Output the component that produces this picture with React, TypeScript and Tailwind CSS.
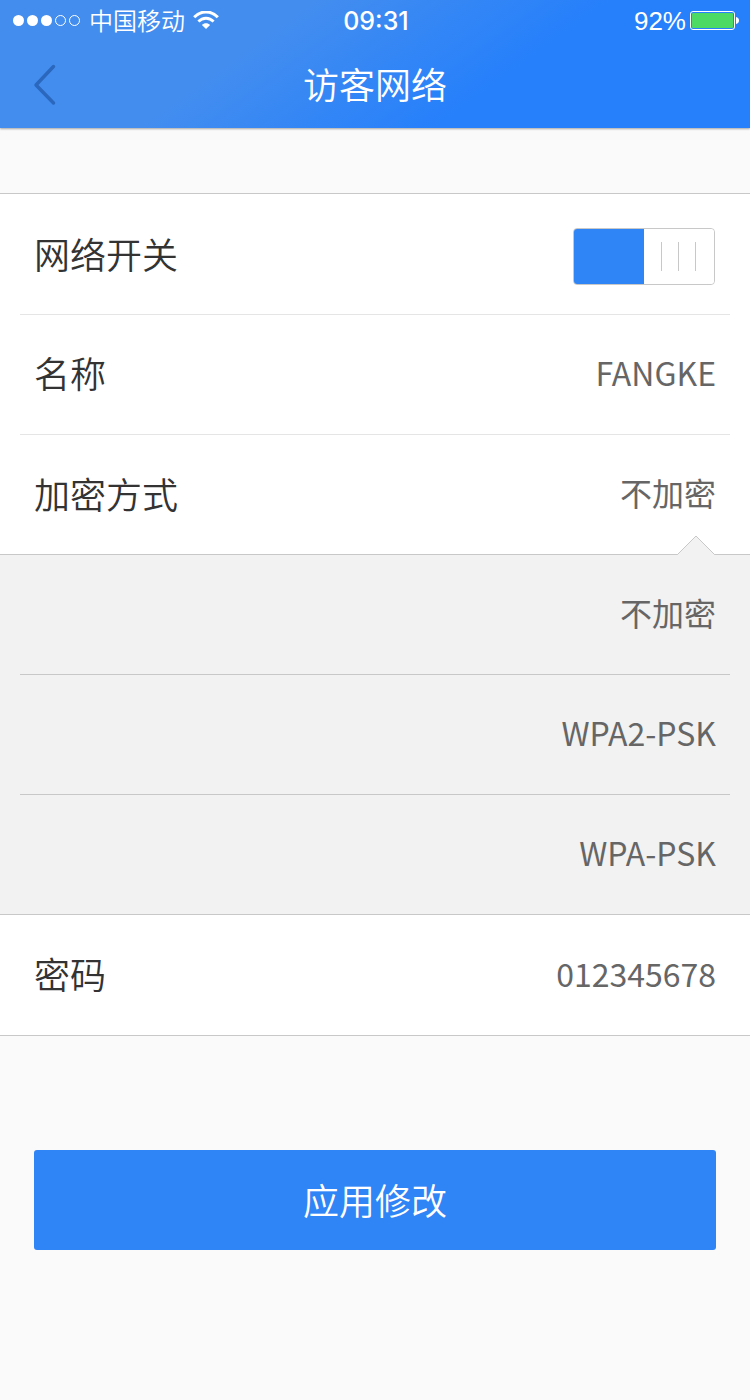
import { useState } from "react";
import type { ReactNode } from "react";

const ENCRYPTION_MODES = ["不加密", "WPA2-PSK", "WPA-PSK"];

function WifiIcon() {
  return (
    <svg className="h-[18px] w-[26px]" viewBox="0 0 26 18" fill="none" aria-hidden="true">
      <path d="M1.2 6.2C7.8 -0.8 18.2 -0.8 24.8 6.2" stroke="white" strokeWidth="3" />
      <path d="M5.4 10.6C9.8 6.1 16.2 6.1 20.6 10.6" stroke="white" strokeWidth="2.8" />
      <path d="M13 18L8.9 13.9C11.2 11.6 14.8 11.6 17.1 13.9Z" fill="white" />
    </svg>
  );
}

function StatusBar() {
  return (
    <div className="grid h-10 grid-cols-3 items-center pr-[11px] pl-[13px] text-white">
      <div className="flex items-center">
        <svg className="h-3 w-[68px]" viewBox="0 0 68 12" aria-hidden="true">
          <circle cx="5.5" cy="6.5" r="5.5" fill="white" />
          <circle cx="19.5" cy="6.5" r="5.5" fill="white" />
          <circle cx="33.5" cy="6.5" r="5.5" fill="white" />
          <circle cx="47.5" cy="6.5" r="5" fill="none" stroke="white" />
          <circle cx="61.5" cy="6.5" r="5" fill="none" stroke="white" />
        </svg>
        <span className="mr-2 ml-2 text-2xl leading-10 whitespace-nowrap">中国移动</span>
        <WifiIcon />
      </div>
      <span className="pt-0.5 text-center font-['Inter',sans-serif] text-[25px] leading-9 font-medium">09:31</span>
      <div className="flex items-center justify-end gap-1">
        <span className="pt-0.5 font-['Liberation_Sans',sans-serif] text-[26px] leading-9">92%</span>
        <svg className="h-5 w-[49px]" viewBox="0 0 49 20" aria-hidden="true">
          <rect x="0.5" y="1.5" width="44" height="18" rx="2.5" fill="none" stroke="white" />
          <rect x="2" y="3" width="41" height="15" rx="1" fill="#4cd964" />
          <path d="M46 7C50 7.5 50 13.500 46 14Z" fill="white" />
        </svg>
      </div>
    </div>
  );
}

function Row({ children, className }: { children: ReactNode; className: string }) {
  return (
    <div className="px-5">
      <div className={`flex items-center justify-between border-[#e5e5e5] px-[14px] ${className}`}>{children}</div>
    </div>
  );
}

export default function App() {
  const [enabled, setEnabled] = useState(true);
  const [name, setName] = useState("FANGKE");
  const [mode, setMode] = useState("不加密");
  const [open, setOpen] = useState(true);
  const [password, setPassword] = useState("012345678");

  return (
    <div className="min-h-screen bg-[#fafafa] font-['Noto_Sans_CJK_SC',sans-serif] font-[350] text-[#333]">
      <header className="bg-[linear-gradient(144deg,#438def_0%,#438def_34%,#2680fb_66%,#2680fb_100%)] shadow-[0_1px_2px_rgba(0,0,0,0.35)]">
        <StatusBar />
        <div className="grid h-22 grid-cols-[88px_1fr_88px] items-center">
          <button type="button" aria-label="返回" className="flex h-22 cursor-pointer items-center pl-[33px]">
            <svg className="h-11 w-6" viewBox="0 0 24 44" fill="none" aria-hidden="true">
              <path
                d="M20.500 4.500L3 23L20.500 41"
                stroke="#2a67bd"
                strokeWidth="3.4"
                strokeLinecap="round"
                strokeLinejoin="round"
              />
            </svg>
          </button>
          <h1 className="pb-0.5 text-center text-4xl text-white">访客网络</h1>
        </div>
      </header>

      <form onSubmit={(e) => e.preventDefault()}>
        <div className="mt-[65px] border-y border-[#c8c8c8] bg-white">
          <Row className="h-[121px] border-b">
            <label htmlFor="network" className="pb-0.5 text-4xl">网络开关</label>
            <span className="relative mt-1 mr-px flex h-[57px] w-[142px] overflow-hidden rounded-[4px] border border-[#c8c8c8] bg-white">
              <input
                id="network"
                type="checkbox"
                role="switch"
                checked={enabled}
                onChange={(e) => setEnabled(e.target.checked)}
                className="absolute inset-0 z-10 cursor-pointer opacity-0"
              />
              <span className={enabled ? "w-1/2 bg-[#2f84f6]" : "order-2 w-1/2 bg-[#e5e5e5]"} />
              <span className="flex w-1/2 items-center justify-center gap-4 rounded-[3px] bg-white pr-0.5">
                <span className="h-[29px] w-px bg-[#c8c8c8]" />
                <span className="h-[29px] w-px bg-[#c8c8c8]" />
                <span className="h-[29px] w-px bg-[#c8c8c8]" />
              </span>
            </span>
          </Row>
          <Row className="h-[120px] border-b">
            <label htmlFor="name" className="shrink-0 pb-1.5 text-4xl">名称</label>
            <input
              id="name"
              type="text"
              value={name}
              onChange={(e) => setName(e.target.value)}
              className="min-w-0 flex-1 bg-transparent pb-1.5 text-right text-[32px] font-normal text-[#666] outline-none"
            />
          </Row>
          <div className="relative">
            <Row className="h-[119px]">
              <span id="mode-label" className="shrink-0 pb-1 text-4xl">加密方式</span>
              <button
                type="button"
                aria-labelledby="mode-label mode-value"
                aria-expanded={open}
                onClick={() => setOpen(!open)}
                className="flex-1 cursor-pointer pb-1.5 text-right text-[32px] font-normal text-[#666]"
              >
                <span id="mode-value">{mode}</span>
              </button>
            </Row>
            {open && (
              <svg className="absolute right-[34px] -bottom-px h-5 w-10" viewBox="0 0 40 20" aria-hidden="true">
                <path d="M1 20L20 1L39 20Z" fill="#f2f2f2" />
                <path d="M0.500 19.500H1.500L20 1L38.500 19.500H39.500" fill="none" stroke="#c8c8c8" />
              </svg>
            )}
          </div>
          {open && (
            <div
              role="radiogroup"
              aria-labelledby="mode-label"
              className="border-y border-[#c8c8c8] bg-[#f2f2f2] px-5"
            >
              {ENCRYPTION_MODES.map((option) => (
                <label
                  key={option}
                  className="relative flex h-[120px] cursor-pointer items-center justify-end border-b border-[#c8c8c8] px-[14px] pb-1.5 text-[32px] font-normal text-[#666] last:h-[119px] last:border-b-0"
                >
                  <input
                    type="radio"
                    name="mode"
                    value={option}
                    checked={mode === option}
                    onChange={() => setMode(option)}
                    className="absolute inset-0 cursor-pointer opacity-0"
                  />
                  {option}
                </label>
              ))}
            </div>
          )}
          <Row className="h-[120px]">
            <label htmlFor="password" className="shrink-0 pb-1 text-4xl">密码</label>
            <input
              id="password"
              type="text"
              value={password}
              onChange={(e) => setPassword(e.target.value)}
              className="min-w-0 flex-1 bg-transparent pb-1 text-right text-[32px] font-normal text-[#666] outline-none"
            />
          </Row>
        </div>
        <div className="px-[34px] pt-[114px] pb-10">
          <button
            type="submit"
            className="h-[100px] w-full cursor-pointer rounded-[3px] bg-[#2f84f6] pb-0.5 text-4xl text-white"
          >
            应用修改
          </button>
        </div>
      </form>
    </div>
  );
}
